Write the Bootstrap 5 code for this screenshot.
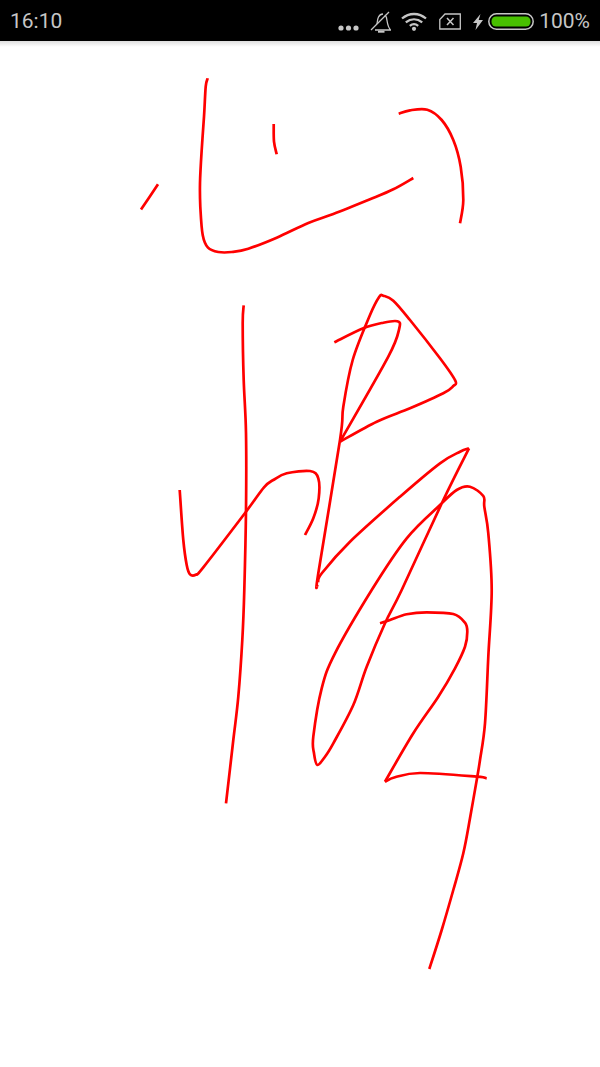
<!DOCTYPE html>
<html lang="en">
<head>
<meta charset="utf-8">
<title>Sketch</title>
<link href="https://cdn.jsdelivr.net/npm/bootstrap@5.3.0/dist/css/bootstrap.min.css" rel="stylesheet">
<style>
html, body { margin: 0; background: #fff; overflow: hidden; }
.phone-bar { height: 41px; background: #000; color: #c6c6c6; font-family: "Roboto", "Liberation Sans", sans-serif; font-size: 21px; line-height: 1; padding: 2px 10px 0 10px; }
.bar-shadow { height: 6px; margin-bottom: -6px; background: linear-gradient(#dedede, #fff); position: relative; }
.ink { display: block; width: 600px; height: 1026px; }
.ink path { fill: none; stroke: #f00; stroke-width: 2.7; stroke-linejoin: round; stroke-linecap: butt; }
.glyph { display: block; fill: none; stroke: #c6c6c6; }
.dots-low { margin-top: 13px; }
.gap-bell { margin-left: 11px; }
.gap-wifi { margin-left: 10px; }
.gap-card { margin-left: 12px; }
.gap-bolt { margin-left: 12px; }
.gap-batt { margin-left: 5px; }
.gap-pct { margin-left: 5px; }
</style>
</head>
<body>
<header class="phone-bar d-flex align-items-center justify-content-between">
  <span>16:10</span>
  <div class="d-flex align-items-center">
    <svg class="glyph dots-low" width="21" height="6" viewBox="0 0 21 6"><circle cx="3" cy="3" r="2.600" fill="#c6c6c6" stroke="none"/><circle cx="10.500" cy="3" r="2.600" fill="#c6c6c6" stroke="none"/><circle cx="18" cy="3" r="2.600" fill="#c6c6c6" stroke="none"/></svg>
    <svg class="glyph gap-bell" width="21" height="22" viewBox="0 0 21 22" stroke-width="1.300"><path d="M1 19 19 1"/><path d="M5 19H20.500C18 16 17.500 13 17 9.500 16.700 7 16.200 5 15 4M7 13C7.500 10 7.500 8 8.500 6 9.500 4 11 3 13 3"/><path d="M8 20.700H14.500" stroke-width="2"/></svg>
    <svg class="glyph gap-wifi" width="26" height="19" viewBox="0 0 26 19"><path d="M1 6.500C8 .5 18 .5 25 6.500M4.800 10.300c5-4 11.400-4 16.400 0M8.800 13.800c2.800-2.200 5.600-2.200 8.400 0" stroke-width="2.300"/><circle cx="13" cy="16.800" r="2.100" fill="#c6c6c6" stroke="none"/></svg>
    <svg class="glyph gap-card" width="22" height="17" viewBox="0 0 22 17" stroke-width="1.300"><path d="M6 1h15.300v15H.8V6.500Z"/><path d="M8 5 14.500 12M14.500 5 8 12" stroke-width="1.500"/></svg>
    <svg class="glyph gap-bolt" width="10" height="16" viewBox="0 0 10 16"><path d="M7.500 0 0 9h4L2.500 16 10 6H5.700Z" fill="#c6c6c6" stroke="none"/></svg>
    <svg class="glyph gap-batt" width="46" height="17" viewBox="0 0 46 17"><rect x=".8" y=".8" width="44.400" height="15.400" rx="7.700" stroke-width="1.500"/><rect x="3.500" y="3.500" width="39" height="10" rx="4.500" fill="#48c000" stroke="none"/></svg>
    <span class="gap-pct">100%</span>
  </div>
</header>
<div class="bar-shadow"></div>
<main>
<svg class="ink" viewBox="0 41 600 1026" xmlns="http://www.w3.org/2000/svg">
  <path data-pts="141,209.500 158,184.300"/>
  <path data-pts="207.700,78.300 205.700,86.700 204,116.700 201.700,150 200,183 200.300,206.700 202.700,235 208,247.700 218.300,252 231.700,252 248.300,248.700 276.700,237.700 308.300,223 333.300,214 370,199.300 393.300,189.300 413.300,178"/>
  <path data-pts="273.700,124 274,141.700 276.700,154.300"/>
  <path data-pts="398.700,113.700 410,110.300 427.300,109.700 441.700,120 453.300,140 460.700,166.700 463.300,200 460,223.300"/>
  <path data-pts="243.700,305.300 242.700,323 243.700,380 246,433 246,510 244.300,590 242.300,640 238.300,696.700 233.300,740 226,803.300"/>
  <path data-pts="179.700,490 183.300,540 186.700,565 190,574.300 195.700,574.700 203.300,567.300 246,511.700 264,487.300 273.300,480 286.700,473.300 310,471 318.300,478.300 318.700,498.300 313.300,518.300 305,535"/>
  <path data-pts="334.300,342.300 363.300,328.300 383.300,322.700 397.300,321.300 399.300,328.300 388.300,356.700 340,441.700"/>
  <path data-pts="340,441.700 376.700,421.700 410,408.300 443.300,393.300 453.300,386 455.300,380.700 440,358.300 410,320 393.300,300.700 383.300,295.700 379.300,296.700 370,315 352.700,360 343.300,406.700 340,440 318.300,573.300 317.300,586"/>
  <path data-pts="318,582 322,573 350,541.700 400,496.700 440,463.300 460,451.700 469,448.300"/>
  <path data-pts="469,448.300 443.300,500 401.700,590 385,623.300 366.700,666.700 353.300,705 333.300,743.300 325,756.700 317.300,765 314,753.300 313.300,736.700 321.700,688.300 335,653.300 371.700,590 406.700,538.300 440,505 456.700,490 470,486.700 483.300,496 484.300,506.700 488.300,533.300 491.700,590 488.300,656.700 485,723.300 480,760 477.300,776.700 470,818.300 463.300,853.300 453.300,890 441.700,930 429.300,969"/>
  <path data-pts="380,623.300 390,620 406.700,614.300 426.700,612.300 453.300,614 465,622.700 467.300,631.700 465,646.700 455,668.300 438.300,696.700 413.300,733.300 385,781.700"/>
  <path data-pts="385,781.700 395,777.300 420,773 476.700,776.700 486.700,778.300"/>
</svg>
</main>
<script src="https://cdn.jsdelivr.net/npm/bootstrap@5.3.0/dist/js/bootstrap.bundle.min.js"></script>
<script>
document.querySelectorAll('.ink path').forEach(function (el) {
  var p = el.dataset.pts.trim().split(/\s+/).map(function (s) { return s.split(',').map(Number); });
  var d = 'M' + p[0][0] + ' ' + p[0][1];
  for (var i = 0; i < p.length - 1; i++) {
    var a = p[i - 1] || p[i], b = p[i], c = p[i + 1], e = p[i + 2] || c;
    d += ' C' + (b[0] + (c[0] - a[0]) / 6).toFixed(1) + ' ' + (b[1] + (c[1] - a[1]) / 6).toFixed(1) + ' ' +
         (c[0] - (e[0] - b[0]) / 6).toFixed(1) + ' ' + (c[1] - (e[1] - b[1]) / 6).toFixed(1) + ' ' + c[0] + ' ' + c[1];
  }
  el.setAttribute('d', d);
});
</script>
</body>
</html>
